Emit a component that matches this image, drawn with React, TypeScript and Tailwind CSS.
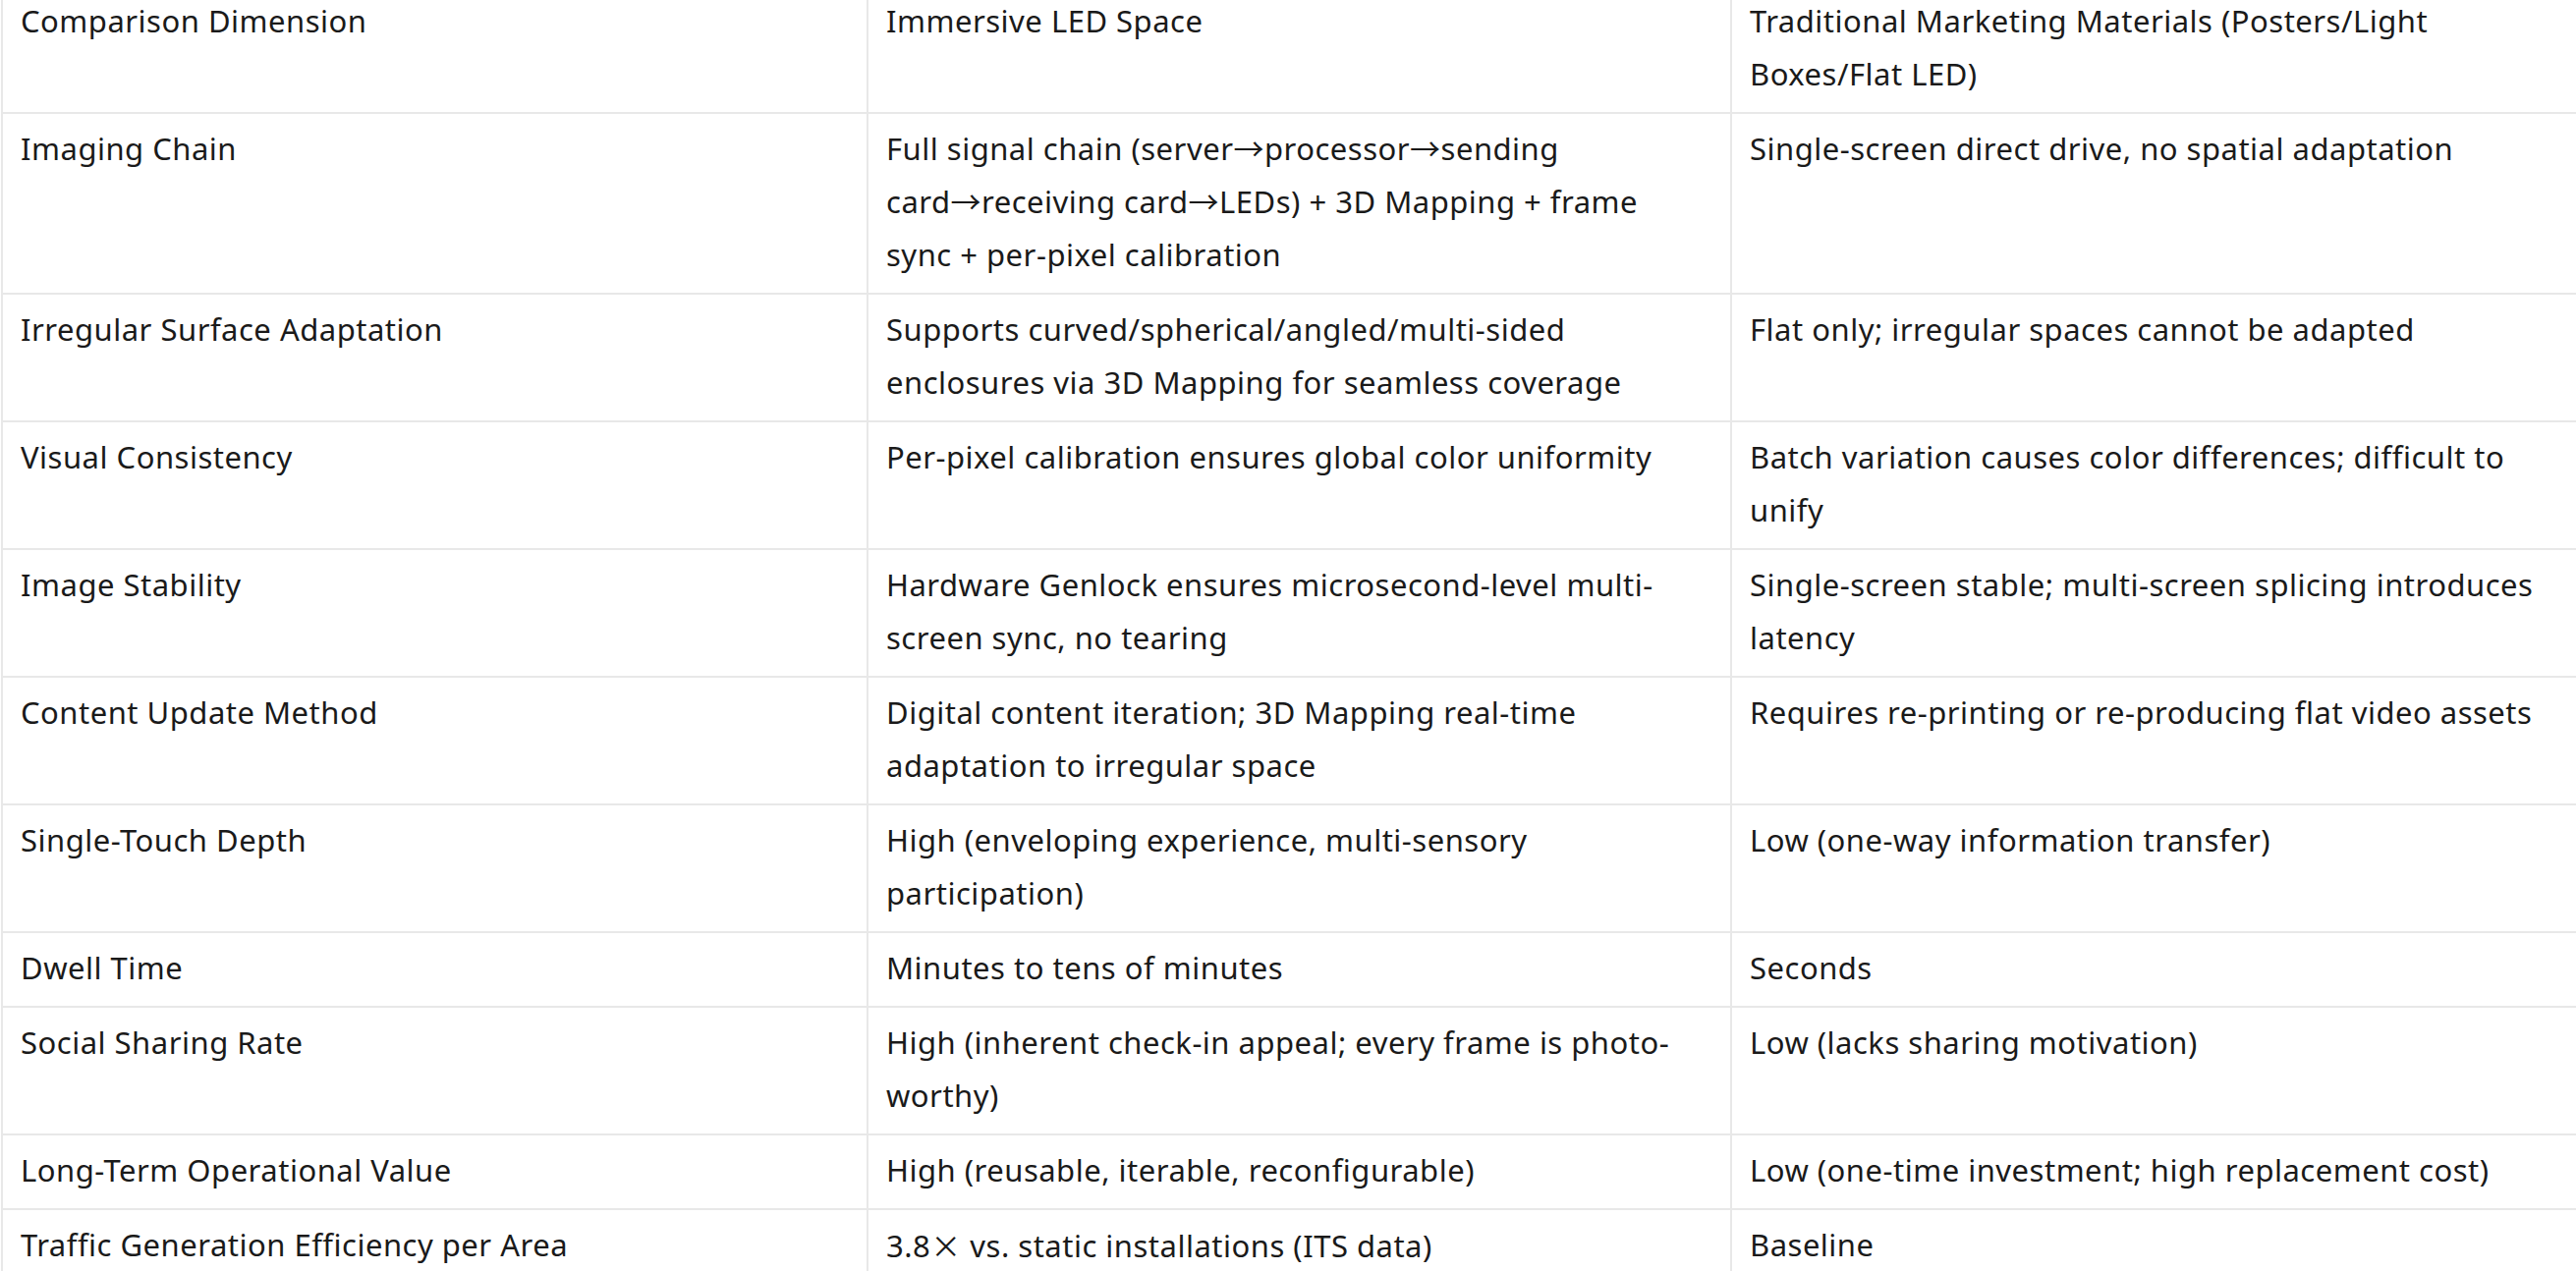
const rows: string[][][] = [
  [
    ["Comparison Dimension"],
    ["Immersive LED Space"],
    ["Traditional Marketing Materials (Posters/Light", "Boxes/Flat LED)"],
  ],
  [
    ["Imaging Chain"],
    [
      "Full signal chain (server→processor→sending",
      "card→receiving card→LEDs) + 3D Mapping + frame",
      "sync + per-pixel calibration",
    ],
    ["Single-screen direct drive, no spatial adaptation"],
  ],
  [
    ["Irregular Surface Adaptation"],
    ["Supports curved/spherical/angled/multi-sided", "enclosures via 3D Mapping for seamless coverage"],
    ["Flat only; irregular spaces cannot be adapted"],
  ],
  [
    ["Visual Consistency"],
    ["Per-pixel calibration ensures global color uniformity"],
    ["Batch variation causes color differences; difficult to", "unify"],
  ],
  [
    ["Image Stability"],
    ["Hardware Genlock ensures microsecond-level multi-", "screen sync, no tearing"],
    ["Single-screen stable; multi-screen splicing introduces", "latency"],
  ],
  [
    ["Content Update Method"],
    ["Digital content iteration; 3D Mapping real-time", "adaptation to irregular space"],
    ["Requires re-printing or re-producing flat video assets"],
  ],
  [
    ["Single-Touch Depth"],
    ["High (enveloping experience, multi-sensory", "participation)"],
    ["Low (one-way information transfer)"],
  ],
  [["Dwell Time"], ["Minutes to tens of minutes"], ["Seconds"]],
  [
    ["Social Sharing Rate"],
    ["High (inherent check-in appeal; every frame is photo-", "worthy)"],
    ["Low (lacks sharing motivation)"],
  ],
  [
    ["Long-Term Operational Value"],
    ["High (reusable, iterable, reconfigurable)"],
    ["Low (one-time investment; high replacement cost)"],
  ],
  [
    ["Traffic Generation Efficiency per Area"],
    ["3.8× vs. static installations (ITS data)"],
    ["Baseline"],
  ],
];

// the × sign is drawn full width in the reference
const Line = ({ text }: { text: string }) => {
  const parts = text.split("×");
  if (parts.length === 1) return <div>{text}</div>;
  return (
    <div>
      {parts[0]}
      <span style={{ fontFamily: '"Noto Sans CJK SC", sans-serif' }}>×</span>
      {parts[1]}
    </div>
  );
};

const App = () => {
  return (
    <div className="w-[2622px] h-[1294px] overflow-hidden bg-white">
      <table
        className="mt-[-16px] ml-[1px] w-[2642px] table-fixed border-collapse text-[31px] leading-[54px] tracking-[0.5px] text-[#1a1a1a] [font-variant-ligatures:none]"
        style={{ fontFamily: '"Noto Sans", "Noto Sans CJK SC", sans-serif' }}
      >
        <colgroup>
          <col className="w-[881px]" />
          <col className="w-[879px]" />
          <col className="w-[882px]" />
        </colgroup>
        <tbody>
          {rows.map((row, i) => (
            <tr key={i}>
              {row.map((cell, j) => (
                <td
                  key={j}
                  className="border-2 border-[#e8e8e8] px-[18px] pt-[8px] pb-[12px] align-top whitespace-nowrap"
                >
                  {cell.map((line, k) => (
                    <Line key={k} text={line} />
                  ))}
                </td>
              ))}
            </tr>
          ))}
        </tbody>
      </table>
    </div>
  );
};

export default App;
